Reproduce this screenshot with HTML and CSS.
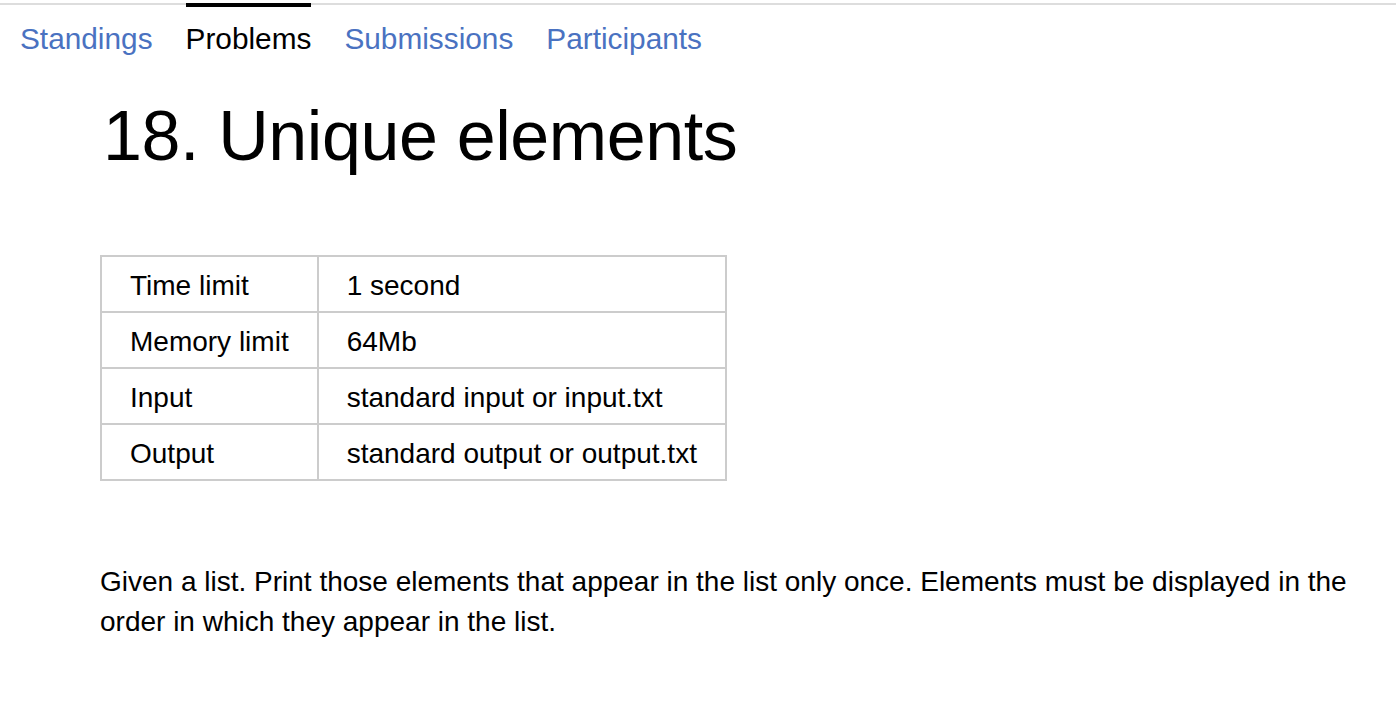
FILE: index.html
```html
<!DOCTYPE html>
<html lang="en">
<head>
<meta charset="utf-8">
<title>18. Unique elements</title>
<link rel="stylesheet" href="styles.css">
</head>
<body>
<nav class="tabs">
  <a class="tab" href="#">Standings</a>
  <a class="tab tab-active" href="#">Problems</a>
  <a class="tab" href="#">Submissions</a>
  <a class="tab" href="#">Participants</a>
</nav>
<main class="content">
  <h1 class="title">18. Unique elements</h1>
  <table class="limits">
    <tr><td>Time limit</td><td>1 second</td></tr>
    <tr><td>Memory limit</td><td>64Mb</td></tr>
    <tr><td>Input</td><td>standard input or input.txt</td></tr>
    <tr><td>Output</td><td>standard output or output.txt</td></tr>
  </table>
  <p class="statement">Given a list. Print those elements that appear in the list only once. Elements must be displayed in the order in which they appear in the list.</p>
</main>
</body>
</html>
```

FILE: styles.css
```css
html, body {
  margin: 0;
  padding: 0;
  background: #fff;
}
body {
  font-family: "Liberation Sans", Arial, sans-serif;
  color: #000;
}
.tabs {
  display: flex;
  gap: 33px;
  margin-top: 3px;
  padding-left: 20px;
  border-top: 2px solid #dddddd;
}
.tab {
  display: block;
  margin-top: -2px;
  padding-top: 15px;
  border-top: 4px solid transparent;
  font-size: 29.8px;
  color: #4a72c1;
  text-decoration: none;
}
.tab-active {
  color: #000;
  border-top-color: #000;
}
.content {
  padding: 40px 26px 0 100px;
}
.title {
  margin: 0 0 0 3px;
  font-size: 70px;
  font-weight: normal;
  line-height: normal;
  letter-spacing: -0.4px;
}
.limits {
  margin-top: 79px;
  border-collapse: collapse;
  font-size: 28px;
}
.limits td {
  border: 2px solid #cccccc;
  padding: 13px 28px 9px;
}
.statement {
  margin: 81px 0 0;
  font-size: 28px;
  line-height: 40px;
}
```
